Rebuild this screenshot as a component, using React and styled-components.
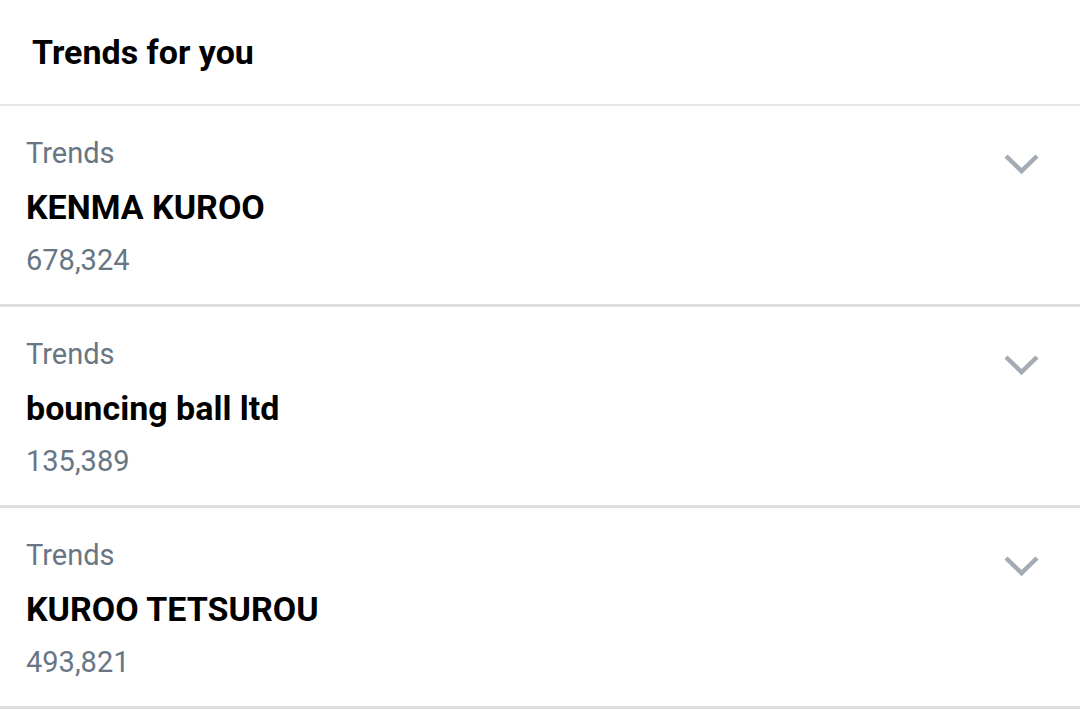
import React from 'react';
import styled, { createGlobalStyle } from 'styled-components';

const GlobalStyle = createGlobalStyle`
    body {
        margin: 0;
        background: #fff;
        font-family: Roboto, "Liberation Sans", Arial, sans-serif;
    }
`;

const Panel = styled.div`
    width: 1080px;
    background: #fff;
`;

const Header = styled.div`
    height: 104px;
    padding-left: 32px;
    border-bottom: 2px solid #e8e8e8;
    display: flex;
    align-items: center;
`;

const Title = styled.h2`
    margin: 0;
    font-size: 34px;
    font-weight: 700;
    line-height: 104px;
    color: #000;
`;

const Row = styled.div`
    display: flex;
    justify-content: space-between;
    align-items: flex-start;
    padding: 29px 0 26px 26px;
    border-bottom: 3px solid #dedede;
`;

const Info = styled.div`
    display: flex;
    flex-direction: column;
`;

const Label = styled.span`
    font-size: 29px;
    line-height: 36px;
    color: #687684;
`;

const Name = styled.span`
    margin: 16px 0 15px;
    font-size: 34px;
    font-weight: 700;
    line-height: 40px;
    color: #000;
`;

const Count = styled.span`
    font-size: 29px;
    line-height: 36px;
    color: #687684;
`;

const Chevron = styled.svg`
    margin: 18px 40px 0 0;
    flex-shrink: 0;
`;

const trends = [
    { name: 'KENMA KUROO', count: '678,324' },
    { name: 'bouncing ball ltd', count: '135,389' },
    { name: 'KUROO TETSUROU', count: '493,821' },
];

const App = () => {
    return (
        <Panel>
            <GlobalStyle />
            <Header>
                <Title>Trends for you</Title>
            </Header>
            {trends.map((t) => (
                <Row key={t.name}>
                    <Info>
                        <Label>Trends</Label>
                        <Name>{t.name}</Name>
                        <Count>{t.count}</Count>
                    </Info>
                    <Chevron width="37" height="22" viewBox="0 0 37 22">
                        <polyline
                            points="3,3 18.5,18 34,3"
                            fill="none"
                            stroke="#a3abb4"
                            strokeWidth="4.5"
                        />
                    </Chevron>
                </Row>
            ))}
        </Panel>
    );
};

export default App;
